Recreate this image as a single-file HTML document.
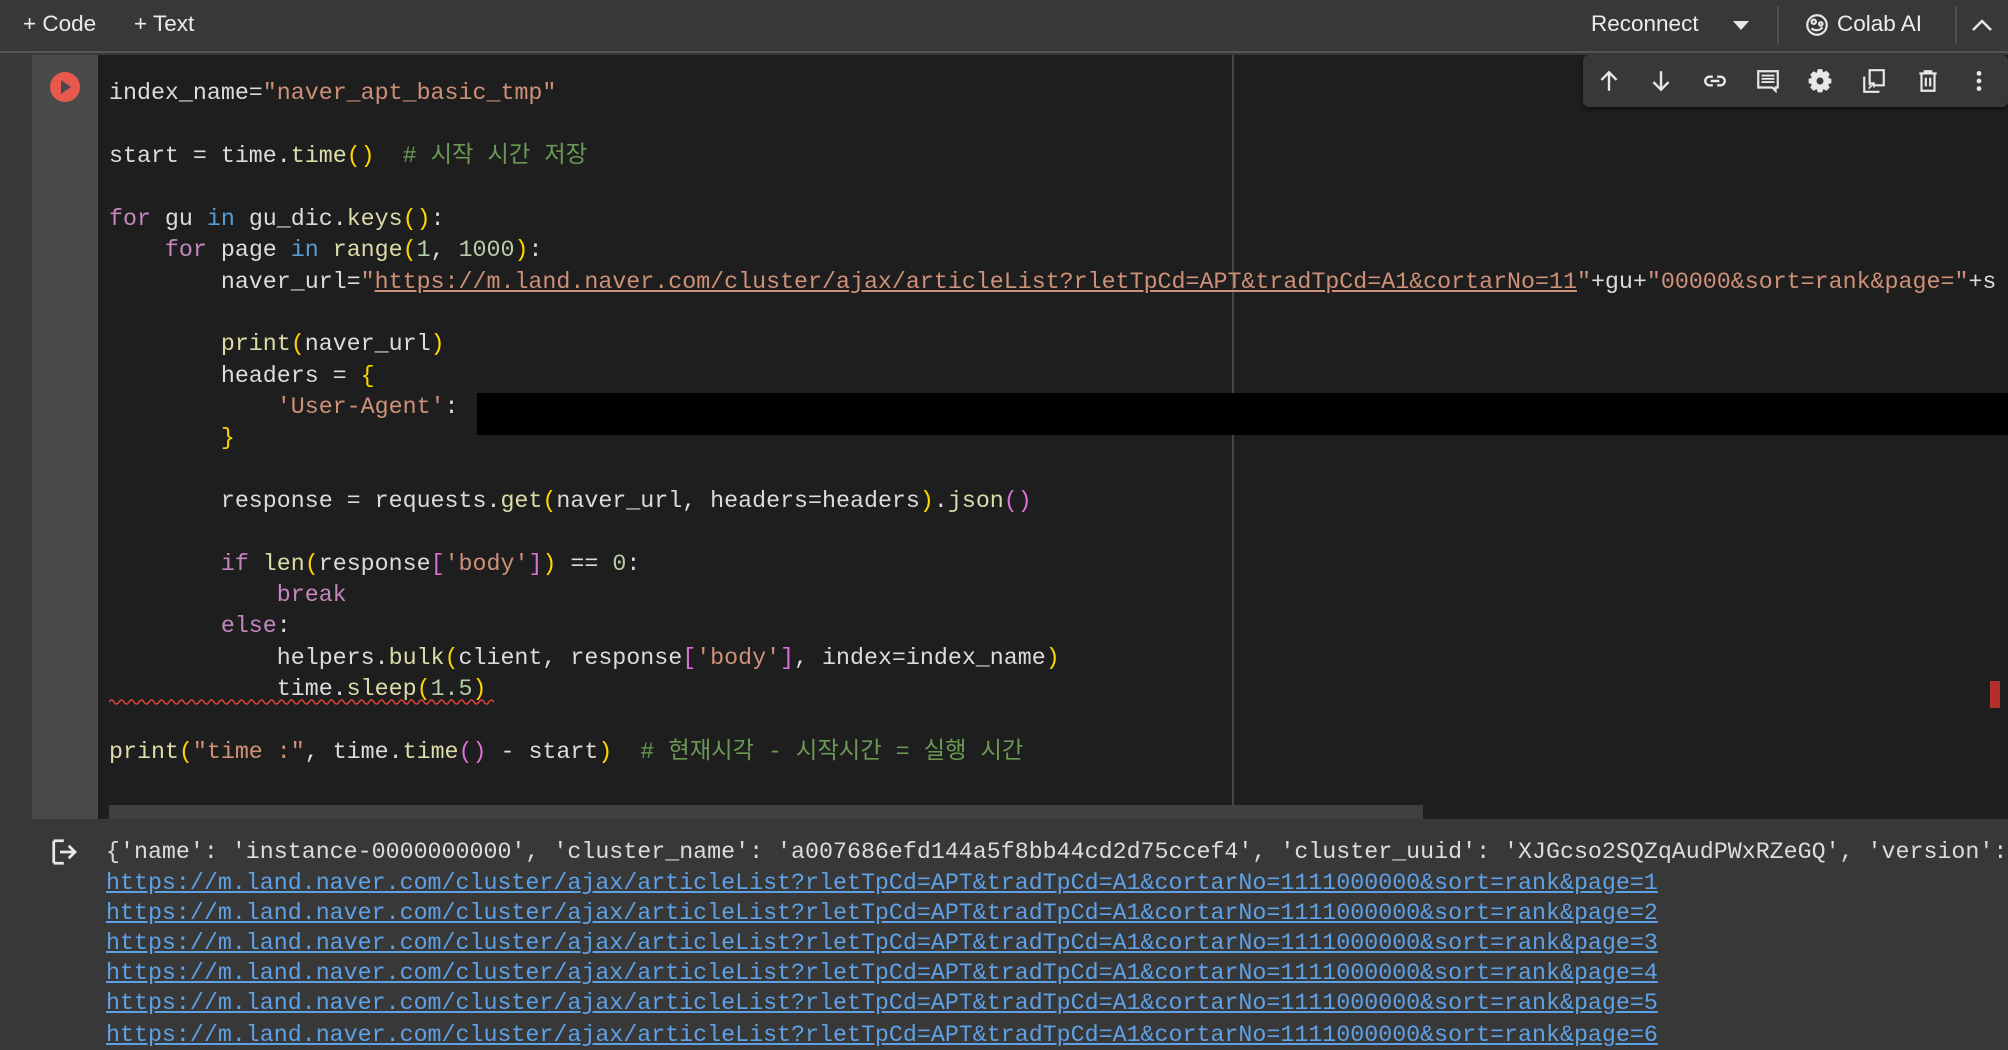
<!DOCTYPE html>
<html><head><meta charset="utf-8"><style>
*{margin:0;padding:0;box-sizing:border-box}
body{width:2008px;height:1034px;background:#383838;overflow:hidden;position:relative;font-family:"Liberation Sans","Noto Sans CJK KR",sans-serif;color:#e3e3e3}
.top{position:absolute;left:0;top:0;width:2008px;height:53px;background:#383838;border-bottom:2px solid #555}
.tt{position:absolute;top:11px;font-size:22.5px;color:#ececec}
.sep{position:absolute;top:6px;width:2px;height:38px;background:#4e4e4e}
.gut{position:absolute;left:32px;top:55px;width:66px;height:764px;background:#4a4a4a}
.code{position:absolute;left:98px;top:55px;width:1910px;height:764px;background:#1e1e1e;overflow:hidden}
.ln{position:absolute;left:11px;white-space:pre;font-family:"Liberation Mono","Noto Sans CJK KR",monospace;font-size:23.3px;line-height:31px;color:#dcdcdc}
.s{color:#ce9178}.k{color:#c586c0}.b{color:#569cd6}.f{color:#dcdcaa}.p{color:#ffd700}.pp{color:#da70d6}.c{color:#6a9955}.n{color:#b5cea8}
.out{position:absolute;left:106px;white-space:pre;font-family:"Liberation Mono",monospace;font-size:23.3px;line-height:30px;color:#dcdcdc}
.lk{color:#5ea1e6;text-decoration:underline}
.tb{position:absolute;left:1583px;top:55px;width:425px;height:52px;background:#383838;border-radius:6px;box-shadow:0 2px 4px rgba(0,0,0,.5)}
.tb svg{position:absolute;top:13px}
</style></head><body>
<div class="top">
<div class="tt" style="left:23px">+ Code</div>
<div class="tt" style="left:134px">+ Text</div>
<div class="tt" style="left:1591px">Reconnect</div>
<svg style="position:absolute;left:1732px;top:19px" width="18" height="12"><path d="M1 2h16L9 11z" fill="#e8e8e8"/></svg>
<div class="sep" style="left:1777px"></div>
<svg style="position:absolute;left:1804px;top:12px" width="26" height="26" viewBox="0 0 24 24" fill="none" stroke="#e8e8e8" stroke-width="2"><circle cx="12" cy="12" r="9"/><circle cx="9" cy="9" r="2"/><circle cx="15.5" cy="11" r="1.6"/><path d="M7 15c3 3 8 2 10-1"/></svg>
<div class="tt" style="left:1837px">Colab AI</div>
<div class="sep" style="left:1955px"></div>
<svg style="position:absolute;left:1970px;top:16px" width="24" height="18"><path d="M3 14l9-9 9 9" stroke="#e8e8e8" stroke-width="2.5" fill="none"/></svg>
</div>
<div class="gut"></div>
<svg style="position:absolute;left:49px;top:71px" width="32" height="32"><circle cx="16" cy="16" r="15" fill="#e8584c"/><path d="M12 9l10 7-10 7z" fill="#4a4a4a"/></svg>
<div class="code">
<div style="position:absolute;left:1134px;top:0;width:2px;height:764px;background:#444"></div>
<div style="position:absolute;left:379px;top:338px;width:1531px;height:42px;background:#000"></div>
<div style="position:absolute;left:1892px;top:626px;width:10px;height:27px;background:#b3302a"></div>
<div style="position:absolute;left:11px;top:750px;width:1314px;height:14px;background:#404040"></div>
<svg style="position:absolute;left:11px;top:643px" width="385" height="8"><path d="M0 4 q2.5 -4 5 0 t5 0 t5 0 t5 0 t5 0 t5 0 t5 0 t5 0 t5 0 t5 0 t5 0 t5 0 t5 0 t5 0 t5 0 t5 0 t5 0 t5 0 t5 0 t5 0 t5 0 t5 0 t5 0 t5 0 t5 0 t5 0 t5 0 t5 0 t5 0 t5 0 t5 0 t5 0 t5 0 t5 0 t5 0 t5 0 t5 0 t5 0 t5 0 t5 0 t5 0 t5 0 t5 0 t5 0 t5 0 t5 0 t5 0 t5 0 t5 0 t5 0 t5 0 t5 0 t5 0 t5 0 t5 0 t5 0 t5 0 t5 0 t5 0 t5 0 t5 0 t5 0 t5 0 t5 0 t5 0 t5 0 t5 0 t5 0 t5 0 t5 0 t5 0 t5 0 t5 0 t5 0 t5 0 t5 0 t5 0 t5 0" stroke="#e0443a" stroke-width="1.5" fill="none"/></svg>
<div class="ln" style="top:23px">index_name=<span class="s">"naver_apt_basic_tmp"</span></div>
<div class="ln" style="top:86px">start = time.<span class="f">time</span><span class="p">()</span>  <span class="c"># 시작 시간 저장</span></div>
<div class="ln" style="top:149px"><span class="k">for</span> gu <span class="b">in</span> gu_dic.<span class="f">keys</span><span class="p">()</span>:</div>
<div class="ln" style="top:180px">    <span class="k">for</span> page <span class="b">in</span> <span class="f">range</span><span class="p">(</span><span class="n">1</span>, <span class="n">1000</span><span class="p">)</span>:</div>
<div class="ln" style="top:212px">        naver_url=<span class="s">"<u>https://m.land.naver.com/cluster/ajax/articleList?rletTpCd=APT&amp;tradTpCd=A1&amp;cortarNo=11</u>"</span>+gu+<span class="s">"00000&amp;sort=rank&amp;page="</span>+s</div>
<div class="ln" style="top:274px">        <span class="f">print</span><span class="p">(</span>naver_url<span class="p">)</span></div>
<div class="ln" style="top:306px">        headers = <span class="p">{</span></div>
<div class="ln" style="top:337px">            <span class="s">'User-Agent'</span>:</div>
<div class="ln" style="top:368px">        <span class="p">}</span></div>
<div class="ln" style="top:431px">        response = requests.<span class="f">get</span><span class="p">(</span>naver_url, headers=headers<span class="p">)</span>.<span class="f">json</span><span class="pp">()</span></div>
<div class="ln" style="top:494px">        <span class="k">if</span> <span class="f">len</span><span class="p">(</span>response<span class="pp">[</span><span class="s">'body'</span><span class="pp">]</span><span class="p">)</span> == <span class="n">0</span>:</div>
<div class="ln" style="top:525px">            <span class="k">break</span></div>
<div class="ln" style="top:556px">        <span class="k">else</span>:</div>
<div class="ln" style="top:588px">            helpers.<span class="f">bulk</span><span class="p">(</span>client, response<span class="pp">[</span><span class="s">'body'</span><span class="pp">]</span>, index=index_name<span class="p">)</span></div>
<div class="ln" style="top:619px">            time.<span class="f">sleep</span><span class="p">(</span><span class="n">1.5</span><span class="p">)</span></div>
<div class="ln" style="top:682px"><span class="f">print</span><span class="p">(</span><span class="s">"time :"</span>, time.<span class="f">time</span><span class="pp">()</span> - start<span class="p">)</span>  <span class="c"># 현재시각 - 시작시간 = 실행 시간</span></div>
</div>
<div class="tb">
<svg style="left:13px" width="26" height="26" viewBox="0 0 24 24"><path d="M12 21V4M5 11l7-7 7 7" stroke="#e8e8e8" stroke-width="2.2" fill="none"/></svg>
<svg style="left:65px" width="26" height="26" viewBox="0 0 24 24"><path d="M12 3v17M5 13l7 7 7-7" stroke="#e8e8e8" stroke-width="2.2" fill="none"/></svg>
<svg style="left:118px" width="28" height="26" viewBox="0 0 24 24"><path d="M10 8H7a4 4 0 000 8h3M14 8h3a4 4 0 010 8h-3M8 12h8" stroke="#e8e8e8" stroke-width="2.2" fill="none"/></svg>
<svg style="left:172px" width="26" height="26" viewBox="0 0 24 24"><path d="M3 3h18v15h-2v3l-3-3H3z" stroke="#e8e8e8" stroke-width="2" fill="none"/><path d="M6 7h12M6 10h12M6 13h12" stroke="#e8e8e8" stroke-width="1.8"/></svg>
<svg style="left:224px" width="26" height="26" viewBox="0 0 24 24"><path d="M10 1h4l1 3 3-1.5 3 3L19.5 9l3 1v4l-3 1 1.5 3-3 3-3-1.5-1 3h-4l-1-3-3 1.5-3-3L4.5 15l-3-1v-4l3-1L3 6l3-3 3 1.5z" fill="#e8e8e8"/><circle cx="12" cy="12" r="3.2" fill="#383838"/></svg>
<svg style="left:278px" width="26" height="26" viewBox="0 0 24 24"><path d="M8 16V2h13v14H12M3 8v14h14" stroke="#e8e8e8" stroke-width="2" fill="none"/><path d="M7 19l5-5M8 14h4v4" stroke="#e8e8e8" stroke-width="1.6" fill="none"/></svg>
<svg style="left:332px" width="26" height="26" viewBox="0 0 24 24"><path d="M4 5h16M9 5V3h6v2M6 5v16h12V5M10 9v8M14 9v8" stroke="#e8e8e8" stroke-width="2" fill="none"/></svg>
<svg style="left:383px" width="26" height="26" viewBox="0 0 24 24"><circle cx="12" cy="5" r="2.2" fill="#e8e8e8"/><circle cx="12" cy="12" r="2.2" fill="#e8e8e8"/><circle cx="12" cy="19" r="2.2" fill="#e8e8e8"/></svg>
</div>
<svg style="position:absolute;left:50px;top:837px" width="30" height="30" viewBox="0 0 24 24"><path d="M3 3h8M3 21h8M3 3v18" stroke="#e8e8e8" stroke-width="2.2" fill="none"/><path d="M8 12h12M15 7l5 5-5 5" stroke="#e8e8e8" stroke-width="2.2" fill="none"/></svg>
<div class="out" style="top:837px">{'name': 'instance-0000000000', 'cluster_name': 'a007686efd144a5f8bb44cd2d75ccef4', 'cluster_uuid': 'XJGcso2SQZqAudPWxRZeGQ', 'version':</div>
<div class="out lk" style="top:868px">https://m.land.naver.com/cluster/ajax/articleList?rletTpCd=APT&amp;tradTpCd=A1&amp;cortarNo=1111000000&amp;sort=rank&amp;page=1</div>
<div class="out lk" style="top:898px">https://m.land.naver.com/cluster/ajax/articleList?rletTpCd=APT&amp;tradTpCd=A1&amp;cortarNo=1111000000&amp;sort=rank&amp;page=2</div>
<div class="out lk" style="top:928px">https://m.land.naver.com/cluster/ajax/articleList?rletTpCd=APT&amp;tradTpCd=A1&amp;cortarNo=1111000000&amp;sort=rank&amp;page=3</div>
<div class="out lk" style="top:958px">https://m.land.naver.com/cluster/ajax/articleList?rletTpCd=APT&amp;tradTpCd=A1&amp;cortarNo=1111000000&amp;sort=rank&amp;page=4</div>
<div class="out lk" style="top:988px">https://m.land.naver.com/cluster/ajax/articleList?rletTpCd=APT&amp;tradTpCd=A1&amp;cortarNo=1111000000&amp;sort=rank&amp;page=5</div>
<div class="out lk" style="top:1020px">https://m.land.naver.com/cluster/ajax/articleList?rletTpCd=APT&amp;tradTpCd=A1&amp;cortarNo=1111000000&amp;sort=rank&amp;page=6</div>
</body></html>
